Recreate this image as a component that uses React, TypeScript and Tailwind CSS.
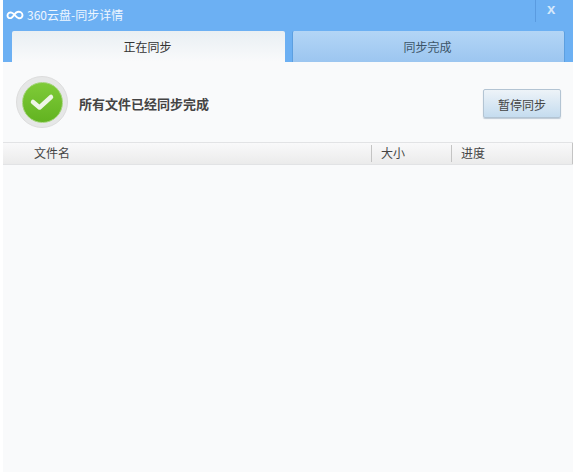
export default function App() {
  const font = { fontFamily: '"Noto Sans CJK SC", "Liberation Sans", sans-serif' };
  return (
    <div className="w-[573px] h-[472px] bg-white pl-[3px] overflow-hidden" style={font}>
      <div className="h-[62px] bg-[#6cb0f3] flex flex-col">
        <div className="h-[31px] flex items-start">
          <div className="flex items-center h-[31px] pl-[3px] gap-[3px] pb-[1px]">
            <svg width="18" height="12" viewBox="0 0 18 12" fill="none">
              <path d="M1.5 6.5C1.5 4.2 3.5 3 5.5 3.6C8.5 4.5 9.8 8.8 12.8 9.2C15 9.5 16.6 8 16.5 6C16.3 3.6 13.8 2.2 11.3 3C8.5 3.9 7.8 8 5 9C3 9.6 1.5 8.4 1.5 6.5Z" stroke="#ffffff" strokeWidth="1.9" />
            </svg>
            <span className="text-[12px] leading-none text-[#eef6ff]">360云盘-同步详情</span>
          </div>
          <div className="ml-auto w-[38px] h-[22px] border-l border-[#5a9be0] flex items-center text-[15px] font-bold text-[#d5e8fb] leading-none pb-[5px] pl-[11px] pr-[16px]" style={{ fontFamily: '"Liberation Sans", sans-serif' }}>
            x
          </div>
        </div>
        <div className="flex h-[31px] pl-[9px] gap-[7px]">
          <div className="w-[273px] rounded-t-[2px] bg-gradient-to-b from-[#e9eff3] to-[#f9fafb] flex items-center justify-center text-[12px] text-[#333] pr-[2px]">
            正在同步
          </div>
          <div className="w-[273px] rounded-t-[2px] border-x border-[#5c9fe0] bg-gradient-to-b from-[#b3d5f6] to-[#9cc6f0] flex items-center justify-center text-[12px] text-[#3c5468] pr-[2px]">
            同步完成
          </div>
        </div>
      </div>
      <div className="h-[410px] bg-[#f9fafb]">
        <div className="h-[80px] flex items-center pl-[13px] pr-[12px]">
          <div className="w-[52px] h-[52px] rounded-full bg-[#e6e7e7] border border-[#dddddd] flex items-center justify-center">
            <div className="w-[41px] h-[41px] rounded-full bg-gradient-to-b from-[#7fcb38] to-[#62b320] border border-[#a5d57c] flex items-center justify-center">
              <svg width="28" height="22" viewBox="0 0 28 22" fill="none">
                <path d="M5 11L11.5 16.5L23 6" stroke="#eef5e6" strokeWidth="4.5" strokeLinecap="round" strokeLinejoin="round" />
              </svg>
            </div>
          </div>
          <div className="ml-[11px] text-[13px] leading-none font-bold text-[#444] pt-[3px]">所有文件已经同步完成</div>
          <button className="ml-auto w-[78px] h-[29px] mt-[3px] rounded-[2px] border border-[#b3c4d3] bg-gradient-to-b from-[#edf3f8] to-[#c5dcef] text-[12px] leading-none pt-[2px] text-[#444] shadow-[0_1px_1px_rgba(100,130,160,0.4)]">
            暂停同步
          </button>
        </div>
        <div className="h-[23px] flex border-y border-[#e2e3e5] bg-gradient-to-b from-[#f9f9fa] to-[#ebebeb] text-[12px] leading-none text-[#444]">
          <div className="w-[368px] pl-[31px] pb-[2px] flex items-center">文件名</div>
          <div className="w-[80px] pl-[10px] pb-[2px] flex items-center relative">
            <span className="absolute left-0 top-[2px] bottom-[2px] w-px bg-[#c4c4c4]" />
            大小
          </div>
          <div className="flex-1 pl-[10px] pb-[2px] flex items-center relative border-r border-[#c4c4c4]">
            <span className="absolute left-0 top-[2px] bottom-[2px] w-px bg-[#c4c4c4]" />
            进度
          </div>
        </div>
      </div>
    </div>
  );
}
